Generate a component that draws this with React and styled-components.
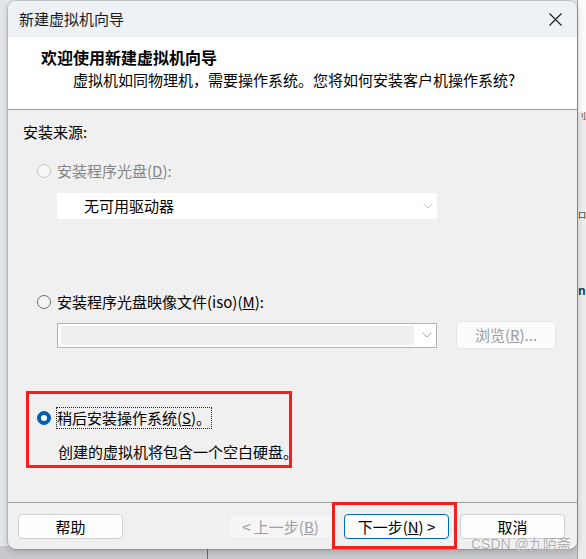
import React from "react";
import styled, { createGlobalStyle } from "styled-components";

const Global = createGlobalStyle`
  html, body { margin: 0; padding: 0; }
  body {
    width: 586px; height: 559px; overflow: hidden;
    font-family: "Noto Sans CJK SC", "Noto Sans", sans-serif;
    color: #000;
  }
  * { box-sizing: border-box; }
`;

const Desktop = styled.div`
  position: relative;
  width: 586px;
  height: 559px;
  overflow: hidden;
  background: linear-gradient(to bottom, #e3e6ea 0, #e3e6ea 546px, #c8c9cc 546px);
`;

const BackWindow = styled.div`
  position: absolute;
  left: 577px;
  top: 0;
  width: 9px;
  height: 559px;
  overflow: hidden;
  background: linear-gradient(to bottom, #fbfbfb 0, #fbfbfb 112px, #ececec 112px);
  border-left: 1px solid #a8a8a8;
`;

const Fragment = styled.span`
  position: absolute;
  left: ${(p) => p.$left}px;
  top: ${(p) => p.$top}px;
  font-size: ${(p) => p.$size || 8}px;
  font-weight: ${(p) => (p.$bold ? 700 : 400)};
  color: ${(p) => p.$color || "#111"};
  line-height: 14px;
  white-space: nowrap;
`;

const DeskLine = styled.div`
  position: absolute;
  left: 207px;
  top: 548px;
  width: 1px;
  height: 11px;
  background: #6a6a6a;
`;

const Window = styled.div`
  position: absolute;
  left: 8px;
  top: 1px;
  width: 569px;
  height: 548px;
  border-radius: 8px;
  overflow: hidden;
  background: #f0f0f0;
  box-shadow: 0 0 0 1px rgba(0, 0, 0, 0.13), 0 2px 7px rgba(0, 0, 0, 0.22);
  display: flex;
  flex-direction: column;
`;

const TitleBar = styled.div`
  height: 36px;
  flex: none;
  background: #eef2f7;
  display: flex;
  align-items: center;
  justify-content: space-between;
  padding: 0 15px 0 11px;
`;

const TitleText = styled.span`
  font-size: 15px;
  line-height: 20px;
  color: #1a1a1a;
`;

const Header = styled.div`
  height: 73px;
  flex: none;
  background: #fff;
  border-bottom: 1px solid #a0a0a0;
  padding: 10px 0 0 33px;
`;

const Heading = styled.div`
  font-size: 16px;
  font-weight: 700;
  line-height: 20px;
`;

const SubHeading = styled.div`
  font-size: 15px;
  line-height: 20px;
  margin-top: 3px;
  padding-left: 32px;
`;

const Body = styled.div`
  flex: 1;
  padding: 12px 0 0 15px;
  display: flex;
  flex-direction: column;
  font-size: 15px;
`;

const Label = styled.div`
  line-height: 20px;
`;

const OptionRow = styled.div`
  display: flex;
  align-items: center;
  gap: 6px;
  height: 20px;
  margin-top: ${(p) => p.$mt}px;
  padding-left: 14px;
`;

const Radio = styled.span`
  width: 14px;
  height: 14px;
  border-radius: 50%;
  flex: none;
  display: flex;
  align-items: center;
  justify-content: center;
  background: ${(p) => (p.$checked ? "#005fb8" : p.$disabled ? "#f7f7f7" : "#f4f4f4")};
  border: 1px solid
    ${(p) => (p.$checked ? "#005fb8" : p.$disabled ? "#c6c6c6" : "#6b6b6b")};
  &::after {
    content: "";
    display: ${(p) => (p.$checked ? "block" : "none")};
    width: 6px;
    height: 6px;
    border-radius: 50%;
    background: #fff;
  }
`;

const OptionText = styled.span`
  line-height: 20px;
  color: ${(p) => (p.$disabled ? "#858585" : "#000")};
  white-space: nowrap;
  ${(p) => (p.$focused ? "outline: 1px dotted #222; outline-offset: 0;" : "")}
`;

const Dropdown = styled.div`
  margin: 12px 0 0 34px;
  width: 380px;
  height: 26px;
  background: #fff;
  display: flex;
  align-items: center;
  justify-content: space-between;
  padding: 0 4px 0 27px;
  line-height: 20px;
`;

const FileRow = styled.div`
  margin: 9px 0 0 34px;
  height: 28px;
  display: flex;
  align-items: center;
  gap: 19px;
`;

const Combo = styled.div`
  width: 380px;
  height: 25px;
  background: #fff;
  border: 1px solid #b3b3b3;
  display: flex;
  align-items: stretch;
  padding: 2px 0 2px 3px;
`;

const ComboField = styled.div`
  flex: 1;
  background: #efefef;
`;

const ChevronBox = styled.div`
  width: 22px;
  display: flex;
  align-items: center;
  justify-content: center;
  padding-left: 4px;
`;

const BrowseButton = styled.div`
  width: 100px;
  height: 28px;
  border-radius: 4px;
  background: #fbfbfb;
  border: 1px solid #e6e6e6;
  color: #9c9c9c;
  display: flex;
  align-items: center;
  justify-content: center;
  line-height: 20px;
`;

const Description = styled.div`
  margin: 14px 0 0 35px;
  line-height: 20px;
  white-space: nowrap;
`;

const Footer = styled.div`
  height: 47px;
  flex: none;
  border-top: 1px solid #a0a0a0;
  padding: 11px 12px 0 10px;
  display: flex;
  align-items: flex-start;
`;

const Spacer = styled.div`
  flex: 1;
`;

const Button = styled.div`
  width: 105px;
  height: 25px;
  border-radius: 4px;
  margin-left: ${(p) => p.$ml || 0}px;
  background: ${(p) => (p.$disabled ? "#f5f5f5" : "#fdfdfd")};
  border: 1px solid
    ${(p) => (p.$primary ? "#0067c0" : p.$disabled ? "#ececec" : "#d0d0d0")};
  color: ${(p) => (p.$disabled ? "#9d9d9d" : "#000")};
  font-size: 15px;
  line-height: 20px;
  display: flex;
  align-items: center;
  justify-content: center;
  white-space: nowrap;
`;

const Annotation = styled.div`
  position: absolute;
  left: ${(p) => p.$left}px;
  top: ${(p) => p.$top}px;
  width: ${(p) => p.$w}px;
  height: ${(p) => p.$h}px;
  border: 3px solid #f81f1b;
  pointer-events: none;
`;

const Watermark = styled.div`
  position: absolute;
  left: 471px;
  top: 534px;
  font-family: "Liberation Sans", "Noto Sans CJK SC", sans-serif;
  font-size: 14px;
  line-height: 20px;
  color: rgba(160, 160, 160, 0.85);
  text-shadow: 0 0 1px #fff;
  white-space: nowrap;
`;

const Chevron = ({ color = "#a8a8a8" }) => (
  <svg width="10" height="6" viewBox="0 0 10 6">
    <path d="M0.5 0.5 L5 5 L9.5 0.5" fill="none" stroke={color} strokeWidth="1" />
  </svg>
);

const CloseIcon = () => (
  <svg width="13" height="13" viewBox="0 0 13 13">
    <path d="M0.5 0.5 L12.5 12.5 M12.5 0.5 L0.5 12.5" stroke="#1a1a1a" strokeWidth="1.1" />
  </svg>
);

export default function App() {
  return (
    <>
      <Global />
      <Desktop>
        <BackWindow>
          <Fragment $left={0} $top={109}>刂</Fragment>
          <Fragment $left={0} $top={208}>口</Fragment>
          <Fragment $left={0} $top={283} $size={12} $bold $color="#1f3d63">n</Fragment>
        </BackWindow>
        <DeskLine />
        <Window>
          <TitleBar>
            <TitleText>新建虚拟机向导</TitleText>
            <CloseIcon />
          </TitleBar>
          <Header>
            <Heading>欢迎使用新建虚拟机向导</Heading>
            <SubHeading>虚拟机如同物理机，需要操作系统。您将如何安装客户机操作系统?</SubHeading>
          </Header>
          <Body>
            <Label>安装来源:</Label>
            <OptionRow $mt={19}>
              <Radio $disabled />
              <OptionText $disabled>
                安装程序光盘(<u>D</u>):
              </OptionText>
            </OptionRow>
            <Dropdown>
              <span>无可用驱动器</span>
              <Chevron color="#c4c4c4" />
            </Dropdown>
            <OptionRow $mt={73}>
              <Radio />
              <OptionText>
                安装程序光盘映像文件(iso)(<u>M</u>):
              </OptionText>
            </OptionRow>
            <FileRow>
              <Combo>
                <ComboField />
                <ChevronBox>
                  <Chevron />
                </ChevronBox>
              </Combo>
              <BrowseButton>
                浏览(<u>R</u>)...
              </BrowseButton>
            </FileRow>
            <OptionRow $mt={59}>
              <Radio $checked />
              <OptionText $focused>
                稍后安装操作系统(<u>S</u>)。
              </OptionText>
            </OptionRow>
            <Description>创建的虚拟机将包含一个空白硬盘。</Description>
          </Body>
          <Footer>
            <Button>帮助</Button>
            <Spacer />
            <Button $disabled>
              &lt; 上一步(<u>B</u>)
            </Button>
            <Button $primary $ml={11}>
              下一步(<u>N</u>) &gt;
            </Button>
            <Button $ml={11}>取消</Button>
          </Footer>
        </Window>
        <Annotation $left={26} $top={391} $w={266} $h={77} />
        <Annotation $left={332} $top={502} $w={125} $h={47} />
        <Watermark>CSDN @九陌斋</Watermark>
      </Desktop>
    </>
  );
}
